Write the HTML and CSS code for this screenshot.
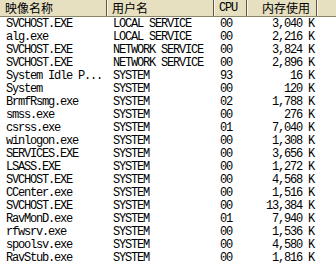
FILE: index.html
```html
<!DOCTYPE html>
<html>
<head>
<meta charset="utf-8">
<link rel="stylesheet" href="styles.css">
</head>
<body>
<div class="list">
  <div class="head">
    <div class="hc cjk">映像名称</div>
    <div class="hc cjk">用户名</div>
    <div class="hc">CPU</div>
    <div class="hc cjk right">内存使用</div>
    <div class="hc last"></div>
  </div>
  <div class="body">
    <div class="row"><span>SVCHOST.EXE</span><span>LOCAL SERVICE</span><span>00</span><span class="mem">3,040 K</span></div>
    <div class="row"><span>alg.exe</span><span>LOCAL SERVICE</span><span>00</span><span class="mem">2,216 K</span></div>
    <div class="row"><span>SVCHOST.EXE</span><span>NETWORK SERVICE</span><span>00</span><span class="mem">3,824 K</span></div>
    <div class="row"><span>SVCHOST.EXE</span><span>NETWORK SERVICE</span><span>00</span><span class="mem">2,896 K</span></div>
    <div class="row"><span>System Idle P...</span><span>SYSTEM</span><span>93</span><span class="mem">16 K</span></div>
    <div class="row"><span>System</span><span>SYSTEM</span><span>00</span><span class="mem">120 K</span></div>
    <div class="row"><span>BrmfRsmg.exe</span><span>SYSTEM</span><span>02</span><span class="mem">1,788 K</span></div>
    <div class="row"><span>smss.exe</span><span>SYSTEM</span><span>00</span><span class="mem">276 K</span></div>
    <div class="row"><span>csrss.exe</span><span>SYSTEM</span><span>01</span><span class="mem">7,040 K</span></div>
    <div class="row"><span>winlogon.exe</span><span>SYSTEM</span><span>00</span><span class="mem">1,308 K</span></div>
    <div class="row"><span>SERVICES.EXE</span><span>SYSTEM</span><span>00</span><span class="mem">3,656 K</span></div>
    <div class="row"><span>LSASS.EXE</span><span>SYSTEM</span><span>00</span><span class="mem">1,272 K</span></div>
    <div class="row"><span>SVCHOST.EXE</span><span>SYSTEM</span><span>00</span><span class="mem">4,568 K</span></div>
    <div class="row"><span>CCenter.exe</span><span>SYSTEM</span><span>00</span><span class="mem">1,516 K</span></div>
    <div class="row"><span>SVCHOST.EXE</span><span>SYSTEM</span><span>00</span><span class="mem">13,384 K</span></div>
    <div class="row"><span>RavMonD.exe</span><span>SYSTEM</span><span>01</span><span class="mem">7,940 K</span></div>
    <div class="row"><span>rfwsrv.exe</span><span>SYSTEM</span><span>00</span><span class="mem">1,536 K</span></div>
    <div class="row"><span>spoolsv.exe</span><span>SYSTEM</span><span>00</span><span class="mem">4,580 K</span></div>
    <div class="row"><span>RavStub.exe</span><span>SYSTEM</span><span>00</span><span class="mem">1,816 K</span></div>
  </div>
</div>
</body>
</html>
```
FILE: styles.css
```css
html, body {
  margin: 0;
  padding: 0;
  background: #ffffff;
}
body {
  width: 336px;
  height: 265px;
  overflow: hidden;
  font-family: "Liberation Mono", "DejaVu Sans Mono", monospace;
  font-size: 12px;
  letter-spacing: -1.2px;
  color: #000;
}
.head {
  display: grid;
  grid-template-columns: 107px 107px 33px 70px 1fr;
  height: 17px;
  background: #e6dfc0;
  border-bottom: 1px solid #8d876a;
  box-sizing: border-box;
}
.hc {
  box-sizing: border-box;
  border-right: 1px solid #5b5744;
  box-shadow: inset 1px 0 #fbf8ea;
  padding-left: 5px;
  line-height: 16px;
  white-space: nowrap;
}
.hc:first-child {
  box-shadow: none;
}
.hc.cjk {
  font-family: "Noto Sans CJK SC", sans-serif;
  font-size: 12px;
  letter-spacing: 0;
}
.hc.right {
  text-align: right;
  padding-right: 6px;
}
.hc.last {
  border-right: none;
}
.body {
  padding-top: 1px;
}
.row {
  display: grid;
  grid-template-columns: 107px 107px 33px 70px 1fr;
  height: 13px;
  line-height: 13px;
  white-space: nowrap;
}
.row span {
  padding-left: 6px;
  overflow: hidden;
}
.row span.mem {
  text-align: right;
  padding-right: 3px;
}
```
